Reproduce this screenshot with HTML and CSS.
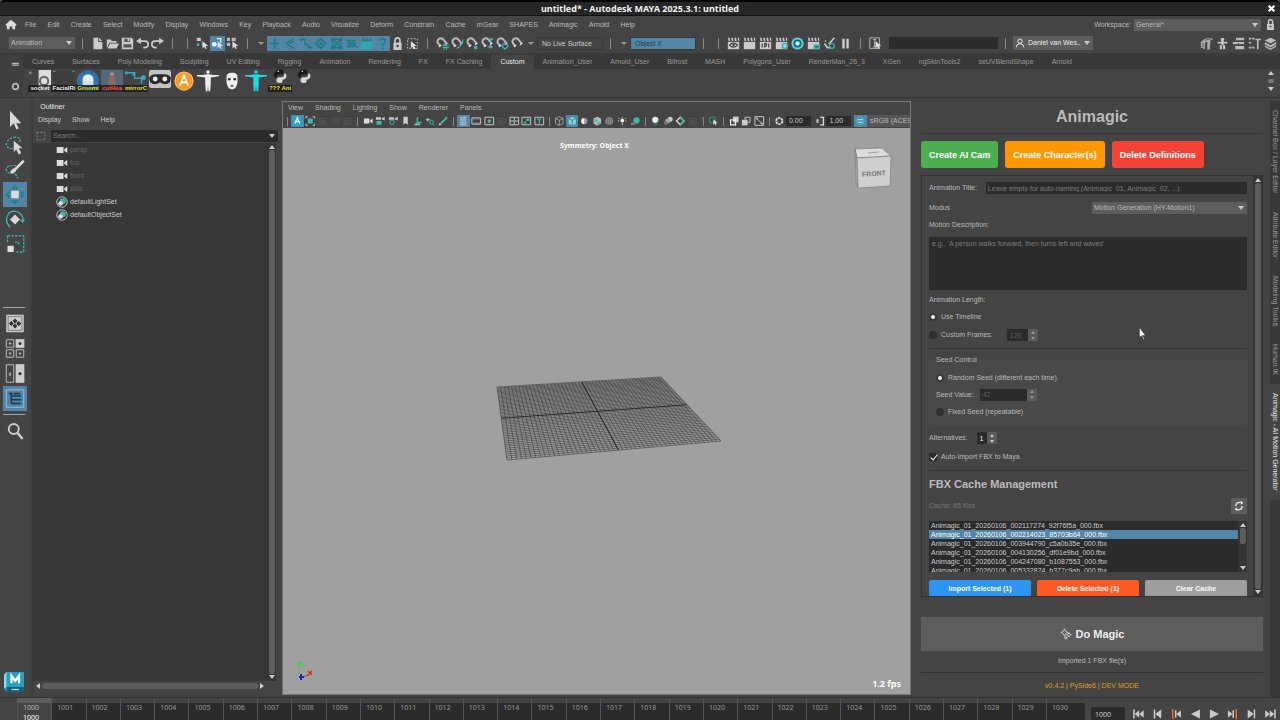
FILE: index.html
```html
<!DOCTYPE html>
<html lang="en">
<head>
  <meta charset="UTF-8" />
  <meta name="viewport" content="width=device-width, initial-scale=1" />
  <title>untitled* - Autodesk MAYA 2025.3.1: untitled</title>
  <link rel="stylesheet" href="styles.css">
</head>
<body>
  <header class="titlebar">
    <h1>untitled* - Autodesk MAYA 2025.3.1: untitled</h1>
    <button class="close" title="Close" data-icons="close"></button>
  </header>

  <!-- MAIN MENU -->
  <nav class="menubar">
    <span class="home" data-icons="home"></span>
    <div class="menus">
      <a href="#">File</a><a href="#">Edit</a><a href="#">Create</a><a href="#">Select</a><a href="#">Modify</a><a href="#">Display</a><a href="#">Windows</a><a href="#">Key</a><a href="#">Playback</a><a href="#">Audio</a><a href="#">Visualize</a><a href="#">Deform</a><a href="#">Constrain</a><a href="#">Cache</a><a href="#">mGear</a><a href="#">SHAPES</a><a href="#">Animagic</a><a href="#">Arnold</a><a href="#">Help</a>
    </div>
    <label class="push" for="workspace">Workspace:</label>
    <span class="select workspace"><select id="workspace"><option>General*</option></select></span>
    <span class="menu-lock" data-icons="lock"></span>
  </nav>

  <!-- STATUS LINE -->
  <div class="statusline">
    <span class="select mode"><select aria-label="Menu set"><option>Animation</option></select></span>
    <i class="sep"></i>
    <div class="icons" data-buttons="new open save undo redo"></div>
    <i class="sep"></i><i class="sep"></i>
    <div class="icons" data-buttons="selHier selObj* selComp"></div>
    <i class="sep"></i><i class="caret"></i>
    <div class="icons masks" data-buttons="mHandle* mJoint* mCurve* mSurface* mDeform* mDynamic* mRender* mMisc*"></div>
    <div class="icons" data-buttons="lock selBox"></div>
    <i class="sep"></i>
    <div class="icons" data-buttons="snapGrid snapCurve snapPoint snapCenter snapPlane magnet"></div>
    <i class="caret"></i>
    <input class="live" type="text" value="No Live Surface" aria-label="Live surface">
    <i class="sep"></i><i class="caret"></i>
    <input class="symmetry" type="text" value="Object X" aria-label="Symmetry">
    <i class="sep"></i><i class="sep"></i>
    <div class="icons spaced" data-buttons="clapEye clap clapIpr clapGear ring clapArrow paint pause"></div>
    <i class="sep"></i>
    <div class="icons" data-buttons="fieldCursor"></div>
    <input class="quick" type="text" aria-label="Quick selection">
    <i class="sep"></i>
    <button class="user"><span data-icons="person"></span>Daniel van Wes..<i class="tri"></i></button>
    <div class="icons push spaced" data-buttons="modelKit humanIk attrEd toolSet channelBox"></div>
  </div>

  <!-- SHELF -->
  <div class="shelf">
    <div class="shelf-gutter">
      <span data-icons="dash"></span>
      <span data-icons="gear"></span>
    </div>
    <div class="shelf-main">
      <nav class="shelf-tabs">
        <a href="#">Curves</a><a href="#">Surfaces</a><a href="#">Poly Modeling</a><a href="#">Sculpting</a><a href="#">UV Editing</a><a href="#">Rigging</a><a href="#">Animation</a><a href="#">Rendering</a><a href="#">FX</a><a href="#">FX Caching</a><a href="#" class="active">Custom</a><a href="#">Animation_User</a><a href="#">Arnold_User</a><a href="#">Bifrost</a><a href="#">MASH</a><a href="#">Polygons_User</a><a href="#">RenderMan_26_3</a><a href="#">XGen</a><a href="#">ngSkinTools2</a><a href="#">seUVBlendShape</a><a href="#">Arnold</a>
      </nav>
      <div class="shelf-items">
        <button data-icons="shSocket"><b class="white">socket</b></button>
        <button data-icons="shFacial"><b class="white">FacialRi</b></button>
        <button data-icons="shGroom"><b>Groomi</b></button>
        <button data-icons="shHead"><b class="red">cutHea</b></button>
        <button data-icons="shMirror"><b>mirrorC</b></button>
        <button data-icons="shRobot" title="Robot"></button>
        <button data-icons="shA" title="Animagic"></button>
        <button data-icons="shBody" title="Body"></button>
        <button data-icons="shFace" title="Face"></button>
        <button class="cyan" data-icons="shBody" title="Rig"></button>
        <button data-icons="shPython"><b>??? Ani</b></button>
        <button data-icons="shPython" title="Script"></button>
        <div class="shelf-scroll"><i class="tri up"></i><i class="knob"></i><i class="tri"></i></div>
      </div>
    </div>
  </div>

  <main class="workspace-area">
    <!-- TOOLBOX -->
    <aside class="toolbox">
      <div class="tools" data-buttons="tSelect tLasso tPaint tMove* tRotate tScale"></div>
      <div class="layouts" data-buttons="lSingle lFour lTwo lOutliner*"></div>
      <div class="find" data-buttons="search"></div>
      <div class="mlogo" data-icons="maya"></div>
    </aside>

    <!-- OUTLINER -->
    <section class="outliner">
      <h2>Outliner</h2>
      <nav><a href="#">Display</a><a href="#">Show</a><a href="#">Help</a></nav>
      <div class="outliner-search">
        <span data-icons="frame"></span>
        <input type="text" placeholder="Search..." aria-label="Search">
        <i class="tri"></i>
      </div>
      <div class="outliner-body">
        <ul>
          <li class="dim"><span data-icons="camera"></span>persp</li>
          <li class="dim"><span data-icons="camera"></span>top</li>
          <li class="dim"><span data-icons="camera"></span>front</li>
          <li class="dim"><span data-icons="camera"></span>side</li>
          <li><span data-icons="set"></span>defaultLightSet</li>
          <li><span data-icons="set"></span>defaultObjectSet</li>
        </ul>
        <div class="vscroll"><i class="tri up"></i><i class="thumb"></i><i class="tri"></i></div>
      </div>
      <div class="hscroll"><i class="tri left"></i><i class="thumb"></i><i class="tri right"></i></div>
    </section>

    <!-- VIEWPORT -->
    <section class="viewport">
      <nav><a href="#">View</a><a href="#">Shading</a><a href="#">Lighting</a><a href="#">Show</a><a href="#">Renderer</a><a href="#">Panels</a></nav>
      <div class="viewbar">
        <i class="sep"></i>
        <div class="vicons n5" data-buttons="vA* vFrame vDim vDim vDim"></div>
        <i class="sep"></i>
        <div class="vicons n7" data-buttons="camera camLock camAttr bookmark imgPlane panZoom pencil"></div>
        <i class="sep"></i>
        <div class="vicons n7" data-buttons="vGrid* vFilm vGate vDim vField vAction vTitle"></div>
        <i class="sep"></i>
        <div class="vicons n7" data-buttons="cube cubeFill* halfBall texBall checker light shadow"></div>
        <i class="sep"></i>
        <div class="vicons n4" data-buttons="ao blur aa vDim"></div>
        <i class="sep"></i>
        <div class="vicons" data-buttons="iso"></div>
        <i class="sep"></i>
        <div class="vicons n3" data-buttons="xray xray2 xjoint"></div>
        <i class="sep"></i>
        <div class="vicons" data-buttons="aperture"></div>
        <input type="text" value="0.00" aria-label="Exposure">
        <div class="vicons" data-buttons="gamma"></div>
        <input type="text" value="1.00" aria-label="Gamma">
        <div class="vicons" data-buttons="colorMgmt*"></div>
        <select aria-label="View transform"><option>sRGB (ACES)</option></select>
      </div>
      <div class="canvas">
        <svg id="scene" viewBox="283 128 627 566" preserveAspectRatio="xMidYMid meet">
          <g id="grid"></g>
          <!-- view cube -->
          <g stroke="#777" stroke-width=".6">
            <path d="M855 149l27-1 9 8-34 2z" fill="#dcdcdc"/>
            <path d="M855 149l2 9 1 30-2-5z" fill="#aaa"/>
            <path d="M857 158l34-2-1 30-32 2z" fill="#cfcfcf"/>
            <path d="M868 153l11-1" fill="none"/>
          </g>
          <text x="874" y="176" class="cube-label" transform="rotate(-3 874 174)">FRONT</text>
          <!-- axis gizmo -->
          <path d="M299 674v-6" stroke="#3c4" stroke-width=".6"/>
          <path d="M302 677l7-2" stroke="#c33"/>
          <path d="M297 662h4v4h-4z" fill="#3bd83b"/>
          <path d="M308 671l4 4m0-4l-4 4" stroke="#d22" stroke-width="1.3"/>
          <path d="M299 677h5M301 674v6" stroke="#22b" stroke-width="2"/>
        </svg>
        <p class="sym-label">Symmetry: Object X</p>
        <p class="fps">1.2 fps</p>
      </div>
    </section>

    <!-- ANIMAGIC PANEL -->
    <section class="animagic">
      <h2>Animagic</h2>
      <div class="top-actions">
        <button class="green">Create AI Cam</button>
        <button class="orange">Create Character(s)</button>
        <button class="crimson">Delete Definitions</button>
      </div>

      <div class="scrollbox">
        <form class="fields" onsubmit="return false">
          <div class="row title-row">
            <label for="animTitle">Animation Title:</label>
            <input type="text" id="animTitle" placeholder="Leave empty for auto-naming (Animagic_01, Animagic_02, ...)">
          </div>
          <div class="row modus-row">
            <label for="modus">Modus</label>
            <span class="select"><select id="modus"><option>Motion Generation (HY-Motion1)</option></select></span>
          </div>
          <label class="line" for="motion">Motion Description:</label>
          <textarea id="motion" placeholder="e.g., 'A person walks forward, then turns left and waves'"></textarea>
          <p class="line">Animation Length:</p>
          <label class="row"><input type="radio" name="length" checked>Use Timeline</label>
          <div class="row frames-row">
            <input type="radio" name="length" id="customFrames"><label for="customFrames">Custom Frames:</label>
            <span class="spin off"><input type="text" value="120" aria-label="Frames" disabled><i class="tri up"></i><i class="tri"></i></span>
          </div>
          <hr>
          <fieldset>
            <legend>Seed Control</legend>
            <label class="row"><input type="radio" name="seed" checked>Random Seed (different each time)</label>
            <div class="row">
              <label for="seedValue">Seed Value:</label>
              <span class="spin seed off"><input type="text" id="seedValue" value="42" disabled><i class="tri up"></i><i class="tri"></i></span>
            </div>
            <label class="row"><input type="radio" name="seed">Fixed Seed (repeatable)</label>
          </fieldset>
          <div class="row alt-row">
            <label for="alternatives">Alternatives:</label>
            <span class="spin alt"><input type="text" id="alternatives" value="1"><i class="tri up"></i><i class="tri"></i></span>
          </div>
          <label class="row auto-row"><input type="checkbox" checked>Auto-import FBX to Maya</label>
          <hr>
          <h3>FBX Cache Management</h3>
          <div class="row cache-row">
            <span>Cache: 65 files</span>
            <button class="refresh" title="Refresh" data-icons="refresh"></button>
          </div>
          <div class="filelist">
            <ul>
              <li>Animagic_01_20260106_002117274_92f76f5a_000.fbx</li>
              <li class="selected">Animagic_01_20260106_002214023_85703b64_000.fbx</li>
              <li>Animagic_01_20260106_003944790_c5a0b35e_000.fbx</li>
              <li>Animagic_01_20260106_004130256_df01e9bd_000.fbx</li>
              <li>Animagic_01_20260106_004247080_b1087553_000.fbx</li>
              <li>Animagic_01_20260106_005332874_b377c9ab_000.fbx</li>
            </ul>
            <div class="vscroll short"><i class="tri up"></i><i class="thumb"></i><i class="tri"></i></div>
          </div>
          <div class="cache-actions">
            <button class="blue">Import Selected (1)</button>
            <button class="deep">Delete Selected (1)</button>
            <button class="grey">Clear Cache</button>
          </div>
        </form>
        <div class="vscroll"><i class="tri up"></i><i class="thumb"></i><i class="tri"></i></div>
      </div>

      <button class="magic"><span data-icons="sparkle"></span>Do Magic</button>
      <p class="status">Imported 1 FBX file(s)</p>
      <p class="version">v0.4.2 | PySide6 | DEV MODE</p>
    </section>

    <nav class="side-tabs">
      <a href="#">Channel Box / Layer Editor</a>
      <a href="#">Attribute Editor</a>
      <a href="#">Modeling Toolkit</a>
      <a href="#">Human IK</a>
      <a href="#" class="active">Animagic - AI Motion Generator</a>
    </nav>
  </main>

  <!-- TIME SLIDER -->
  <footer class="timeline">
    <div class="frames" id="frames"></div>
    <input type="text" value="1000" aria-label="Current frame">
    <div class="transport" data-buttons="toStart stepBack keyBack playBack play keyFwd stepFwd toEnd"></div>
  </footer>

  <svg class="pointer" viewBox="0 0 8 14"><path d="M1 1v10l2-2 2 4 1-1-2-3h3z" fill="#fff" stroke="#222" stroke-width=".6"/></svg>

  <script src="script.js"></script>
</body>
</html>
```
FILE: styles.css
```css
* {
  box-sizing: border-box;
}
body {
  margin: 0;
  height: 100vh;
  display: flex;
  flex-direction: column;
  overflow: hidden;
  background: #444;
  color: #bbb;
  font-family: "Liberation Sans", Arial, sans-serif;
  font-size: 7px;
  line-height: 10px;
}
h1, h2, h3, p, ul {
  margin: 0;
  padding: 0;
}
ul {
  list-style: none;
}
a {
  color: inherit;
  text-decoration: none;
}
button, input, select, textarea {
  margin: 0;
  padding: 0;
  border: none;
  border-radius: 0;
  outline: none;
  background: none;
  color: inherit;
  font: inherit;
}
svg {
  display: block;
  width: 100%;
  height: 100%;
}
.push {
  margin-left: auto;
}

/* small shared parts */
.tri {
  width: 0;
  height: 0;
  border: 3px solid transparent;
  border-top: 4px solid #ccc;
  border-bottom: none;
}
.tri.up {
  border-top: none;
  border-bottom: 4px solid #ccc;
}
.tri.left {
  border: 3px solid transparent;
  border-right: 4px solid #ccc;
  border-left: none;
}
.tri.right {
  border: 3px solid transparent;
  border-left: 4px solid #ccc;
  border-right: none;
}
.select {
  position: relative;
  background: #5d5d5d;
}
.select select {
  appearance: none;
  display: block;
  width: 100%;
  height: 12px;
  padding-left: 2px;
}
.select::after {
  content: "";
  position: absolute;
  right: 3px;
  top: 4px;
  border: 3px solid transparent;
  border-top: 4px solid #ccc;
  border-bottom: none;
  pointer-events: none;
}
.vscroll {
  width: 9px;
  display: flex;
  flex-direction: column;
  align-items: center;
  gap: 1px;
  padding: 2px 0;
  background: #353535;
}
.vscroll .thumb {
  flex: 1;
  width: 6px;
  border-radius: 2px;
  background: #5d5d5d;
}

.titlebar {
  height: 16px;
  flex: none;
  display: flex;
  align-items: center;
  justify-content: center;
  position: relative;
  background: #262626;
  border-top: 2px solid #000;
  border-bottom: 1px solid #111;
  border-radius: 5px 5px 0 0;
  color: #f2f2f2;
}
.titlebar h1 {
  font: bold 9px/12px "Noto Sans", sans-serif;
}
.close {
  position: absolute;
  right: 4px;
  width: 9px;
  height: 9px;
}

.menubar {
  height: 17px;
  flex: none;
  display: flex;
  align-items: center;
  gap: 8px;
  padding: 0 4px 0 5px;
  white-space: nowrap;
}
.menus {
  width: 48%;
  display: flex;
  justify-content: space-between;
}
.home {
  width: 12px;
  height: 11px;
}
.workspace {
  width: 127px;
  margin-left: -5px;
}
.menu-lock {
  width: 11px;
  height: 11px;
  margin-left: -4px;
}

.statusline {
  height: 20px;
  flex: none;
  display: flex;
  align-items: center;
  padding: 0 2px 0 9px;
}
.statusline .mode {
  width: 66px;
}
.icons {
  display: flex;
}
.icons button {
  width: 15px;
  height: 15px;
  padding: 1px;
}
.spaced {
  gap: 1px;
}
.masks {
  width: 123px;
}
.masks button {
  flex: 1;
}
button.on {
  background: #5285a6;
}
.sep {
  width: 15px;
  height: 11px;
  flex: none;
  background: linear-gradient(#888, #888) center / 1px 100% no-repeat;
}
.caret {
  width: 12px;
  display: flex;
  justify-content: center;
}
.caret::before {
  content: "";
  border: 3px solid transparent;
  border-top: 3px solid #999;
  border-bottom: none;
}
.live, .symmetry {
  width: 66px;
  height: 13px;
  padding-left: 4px;
  border: 1px solid #3a3a3a;
  color: #ccc;
}
.symmetry {
  background: #5285a6;
  color: #1f3b50;
}
.quick {
  width: 109px;
  height: 12px;
  margin-left: 6px;
  background: #2b2b2b;
}
.user {
  width: 80px;
  height: 14px;
  display: flex;
  align-items: center;
  gap: 3px;
  padding: 0 2px;
  background: #5d5d5d;
  color: #eee;
  white-space: nowrap;
}
.user span {
  width: 10px;
  height: 10px;
}

.shelf {
  height: 45px;
  flex: none;
  display: flex;
  border-top: 2px solid #3a3a3a;
  border-bottom: 1px solid #333;
}
.shelf-gutter {
  width: 23px;
  display: flex;
  flex-direction: column;
  justify-content: space-between;
  padding: 5px 3px 6px 11px;
  background: #3f3f3f;
}
.shelf-gutter span {
  width: 9px;
  height: 9px;
}
.shelf-main {
  flex: 1;
  min-width: 0;
}
.shelf-tabs {
  height: 14px;
  display: flex;
  background: #383838;
  color: #999;
  line-height: 14px;
  white-space: nowrap;
}
.shelf-tabs a {
  padding: 0 9px;
}
.shelf-tabs .active {
  background: #444;
  color: #eee;
}
.shelf-items {
  display: flex;
  padding: 0 3px 0 5px;
}
.shelf-items > button {
  position: relative;
  width: 24px;
  height: 24px;
  padding: 0 1px;
}
.shelf-items b {
  position: absolute;
  left: 0;
  right: 0;
  bottom: 1px;
  background: rgba(20, 20, 20, 0.75);
  color: #e8e83c;
  font-size: 6px;
  line-height: 7px;
  text-align: center;
  white-space: nowrap;
}
.shelf-items .white {
  color: #eee;
}
.shelf-items .red {
  color: #ff4a4a;
}
.shelf-items button {
  color: #eee;
}
.shelf-items .cyan {
  color: #1fd8e8;
}
.shelf-scroll {
  margin: 2px 3px 0 auto;
  display: flex;
  flex-direction: column;
  align-items: center;
  justify-content: space-between;
  height: 20px;
}
.shelf-scroll .knob {
  width: 6px;
  height: 4px;
  border-radius: 2px;
  background: #777;
}

.workspace-area {
  flex: 1;
  min-height: 0;
  display: flex;
  padding-top: 3px;
}

/* toolbox */
.toolbox {
  width: 33px;
  flex: none;
  display: flex;
  flex-direction: column;
  padding: 6px 6px 4px 3px;
  border-right: 2px solid #3a3a3a;
}
.toolbox button {
  display: block;
  width: 24px;
  height: 25px;
  padding: 2px;
}
.layouts {
  margin-top: 50px;
  padding: 3px 0;
  border-top: 1px solid #aaa;
  border-bottom: 1px solid #aaa;
}
.find {
  padding-top: 4px;
}
.mlogo {
  width: 20px;
  height: 22px;
  margin: auto 0 0 1px;
}

/* outliner */
.outliner {
  width: 247px;
  flex: none;
  display: flex;
  flex-direction: column;
  padding-bottom: 7px;
}
.outliner h2 {
  width: 39px;
  font-size: 7px;
  font-weight: normal;
  line-height: 12px;
  text-align: center;
  color: #eee;
}
.outliner nav {
  display: flex;
  gap: 11px;
  padding: 2px 5px 4px;
  color: #ccc;
}
.outliner-search {
  height: 13px;
  display: flex;
  align-items: center;
  margin: 0 5px 0 3px;
}
.outliner-search span {
  width: 10px;
  height: 10px;
  margin-right: 5px;
}
.outliner-search input {
  flex: 1;
  height: 12px;
  padding-left: 2px;
  background: #2b2b2b;
}
.outliner-search .tri {
  margin-left: -9px;
}
input::placeholder, textarea::placeholder {
  color: #7d7d7d;
}
.outliner-body {
  flex: 1;
  display: flex;
  margin: 1px 4px 0 0;
  background: #373737;
}
.outliner-body ul {
  flex: 1;
  padding: 0 0 0 23px;
}
.outliner-body li {
  display: flex;
  align-items: center;
  gap: 2px;
  height: 13px;
  color: #ccc;
}
.outliner-body .dim {
  color: #666;
}
.outliner-body li span {
  width: 12px;
  height: 12px;
}
.hscroll {
  height: 9px;
  display: flex;
  align-items: center;
  gap: 2px;
  margin-right: 13px;
  padding: 0 3px;
}
.hscroll .thumb {
  flex: 1;
  height: 6px;
  border-radius: 3px;
  background: #5d5d5d;
}

/* viewport */
.viewport {
  flex: 1;
  min-width: 0;
  display: flex;
  flex-direction: column;
  margin: 0 0 2px 2px;
  border: 1px solid #777;
  overflow: hidden;
}
.viewport nav {
  display: flex;
  gap: 12px;
  padding: 1px 5px;
}
.viewbar {
  height: 14px;
  flex: none;
  display: flex;
  align-items: center;
  white-space: nowrap;
}
.viewbar .sep {
  width: 8px;
  height: 9px;
}
.vicons {
  flex: 1 1 12px;
  display: flex;
}
.n3 { flex: 3 1 36px; }
.n4 { flex: 4 1 48px; }
.n5 { flex: 5 1 60px; }
.n7 { flex: 7 1 84px; }
.vicons button {
  flex: 1;
  height: 12px;
  padding: 1px 0;
}
.viewbar input {
  width: 25px;
  height: 10px;
  margin-right: 3px;
  padding-left: 3px;
  background: #2b2b2b;
  color: #ccc;
}
.viewbar select {
  appearance: none;
  width: 43px;
  height: 12px;
  padding-left: 3px;
  background: #555;
}
.canvas {
  flex: 1;
  min-height: 0;
  position: relative;
  background: #a0a0a0;
}
.cube-label {
  font-size: 7px;
  font-weight: bold;
  text-anchor: middle;
  fill: #777;
}
.sym-label {
  position: absolute;
  top: 13px;
  left: 0;
  right: 0;
  padding-right: 4px;
  text-align: center;
  color: #fff;
  font-family: "Noto Sans", sans-serif;
  font-weight: bold;
}
.fps {
  position: absolute;
  right: 9px;
  bottom: 4px;
  color: #fff;
  font: bold 9px/12px "Noto Sans", sans-serif;
}

/* animagic */
.animagic {
  width: 359px;
  flex: none;
  display: flex;
  flex-direction: column;
  padding: 7px 7px 0 10px;
}
.animagic h2 {
  padding-bottom: 7px;
  border-bottom: 1px solid #333;
  font-size: 16px;
  line-height: 18px;
  text-align: center;
}
.top-actions {
  display: flex;
  gap: 7px;
  margin: 7px 0;
}
.top-actions button {
  height: 27px;
  padding: 0 8px;
  border-radius: 3px;
  color: #fff;
  font-size: 9px;
  font-weight: bold;
}
.green { background: #4caf50; }
.orange { background: #ff9800; }
.crimson { background: #f44336; }
.blue { background: #2f95f3; }
.deep { background: #ff5a24; }
.grey { background: #9e9e9e; }

.scrollbox {
  flex: 1;
  min-height: 0;
  display: flex;
  border: 1px solid #333;
  overflow: hidden;
}
.fields {
  flex: 1;
  display: flex;
  flex-direction: column;
  padding: 6px 6px 0 7px;
}
.row {
  height: 17px;
  flex: none;
  display: flex;
  align-items: center;
}
.row input[type="radio"], .row input[type="checkbox"] {
  appearance: none;
  width: 8px;
  height: 8px;
  margin-right: 4px;
  border-radius: 50%;
  background: #303030;
}
.row input[type="radio"]:checked {
  border: 2px solid #3a3a3a;
  background: #eee;
}
.row input[type="checkbox"] {
  border-radius: 1px;
  background: #2b2b2b;
}
.row input[type="checkbox"]::after {
  content: "";
  display: block;
  width: 3px;
  height: 6px;
  margin: 0 0 0 3px;
  border: solid #fff;
  border-width: 0 1px 1px 0;
  transform: rotate(40deg);
}
.title-row {
  height: 12px;
  gap: 9px;
}
.title-row input {
  flex: 1;
  height: 12px;
  padding-left: 2px;
  background: #2b2b2b;
}
.modus-row {
  height: 28px;
  justify-content: space-between;
}
.modus-row .select {
  width: 155px;
}
.line {
  height: 10px;
  margin-bottom: 3px;
}
.fields > .line {
  margin-top: -2px;
}
.fields textarea {
  height: 53px;
  flex: none;
  margin: 4px 0 7px;
  padding: 2px 3px;
  background: #2b2b2b;
  resize: none;
}
.frames-row {
  height: 20px;
}
.spin {
  width: 31px;
  height: 12px;
  display: grid;
  grid-template-columns: 1fr 10px;
  grid-template-rows: 6px 6px;
  place-items: center;
  margin-left: 14px;
  background: #5a5a5a;
}
.spin input {
  grid-row: span 2;
  width: 100%;
  height: 12px;
  padding-left: 3px;
  background: #2b2b2b;
}
.spin .tri {
  border-width: 3px 2px 0;
}
.spin .tri.up {
  border-width: 0 2px 3px;
}
.spin.off input {
  color: #606060;
}
.spin.off .tri {
  opacity: 0.5;
}
.spin.seed {
  width: 57px;
  margin-left: 6px;
}
.spin.alt {
  width: 20px;
  margin-left: 9px;
  color: #eee;
}
.fields hr {
  width: 100%;
  height: 1px;
  flex: none;
  margin: 3px 0 6px;
  border: none;
  background: #333;
}
.fields fieldset {
  flex: none;
  margin: 0;
  padding: 4px 7px 5px;
  border: none;
  background: #494949;
}
.fields legend {
  padding: 0;
}
.alt-row {
  height: 18px;
  margin-top: 4px;
}
.auto-row {
  height: 20px;
}
.animagic h3 {
  font-size: 11px;
  line-height: 15px;
}
.cache-row {
  height: 17px;
  margin: 5px 0 7px;
  justify-content: space-between;
  color: #777;
}
.refresh {
  width: 16px;
  height: 16px;
  padding: 3px;
  background: #5d5d5d;
  color: #eee;
}
.filelist {
  height: 51px;
  flex: none;
  display: flex;
  overflow: hidden;
  background: #2b2b2b;
}
.filelist ul {
  flex: 1;
  color: #ccc;
}
.filelist li {
  height: 9px;
  padding-left: 2px;
  line-height: 9px;
}
.filelist .selected {
  background: #5285a6;
  color: #fff;
}
.vscroll.short .thumb {
  flex: 0 0 16px;
  margin-bottom: auto;
}
.cache-actions {
  display: flex;
  gap: 6px;
  margin-top: 8px;
}
.cache-actions button {
  flex: 1;
  height: 18px;
  border-radius: 2px;
  color: #fff;
  font-weight: bold;
}
.magic {
  height: 34px;
  flex: none;
  display: flex;
  align-items: center;
  justify-content: center;
  gap: 4px;
  margin-top: 20px;
  background: #5d5d5d;
  color: #eee;
  font-size: 11px;
  font-weight: bold;
}
.magic span {
  width: 12px;
  height: 12px;
}
.status {
  padding: 5px 0 6px;
  border-bottom: 1px solid #333;
  text-align: center;
}
.version {
  padding: 8px 0 6px;
  color: #e0a020;
  text-align: center;
}

.side-tabs {
  width: 10px;
  flex: none;
  background: #383838;
  color: #999;
}
.side-tabs a {
  display: block;
  padding: 9px 0;
  writing-mode: vertical-rl;
  line-height: 10px;
  white-space: nowrap;
}
.side-tabs .active {
  background: #444;
  color: #eee;
}

/* time slider */
.timeline {
  height: 23px;
  flex: none;
  display: flex;
  border-top: 1px solid #333;
  font-family: "Noto Sans", sans-serif;
}
.frames {
  flex: 1;
  display: flex;
  margin-left: 17px;
  padding-right: 5px;
  background: linear-gradient(#444 5px, #2b2b2b 5px);
}
.frames div {
  flex: 1 1 0;
  padding: 5px 0 0 5px;
  line-height: 9px;
  border-left: 1px solid #555;
  color: #999;
}
.frames .current {
  background: linear-gradient(#5d5d5d 5px, #444 5px);
  color: #bbb;
}
.frames b {
  display: block;
  line-height: 11px;
  color: #fff;
  font-weight: normal;
}
.timeline input {
  width: 34px;
  height: 15px;
  margin: 9px 4px 0 6px;
  padding-left: 4px;
  background: #2b2b2b;
  color: #ccc;
}
.transport {
  width: 151px;
  display: flex;
  padding-top: 10px;
}
.transport button {
  flex: 1;
  height: 12px;
  color: #ccc;
}

.pointer {
  position: absolute;
  left: 1138px;
  top: 326px;
  width: 9px;
  height: 15px;
  pointer-events: none;
}
```
FILE: script.js
```js
// --- ICONS (all drawn on a 16x16 box) ---
const T = '#3fb8ae';
const M = '#1a7c80';
const arrow = '<path d="M8 5v9l2-2 2 3 1-1-1-3h3z" fill="#ddd"/>';
const clapBase = '<path d="M1 6h14v9H1z" fill="#ccc"/><path d="M1 1h2l1 4H2zM5 1h2l1 4H6zM9 1h2l1 4h-2zM13 1h2v4h-1z" fill="#ccc"/>';
const mag = '<path d="M5 11L2 7q-1-3 2-5 3-1 5 1l4 5" fill="none" stroke="#bbb" stroke-width="2.4"/><path d="M3.500 12l3-2M11 9.500l3-2" stroke="#eee" stroke-width="1.500"/>';
const stroke = (d, c = '#ccc', w = 1.5) => `<path d="${d}" fill="none" stroke="${c}" stroke-width="${w}"/>`;
const fill = (d, c = '#ccc') => `<path d="${d}" fill="${c}"/>`;
const dot = (x, y, r, c = '#ccc') => `<circle cx="${x}" cy="${y}" r="${r}" fill="${c}"/>`;
const ring = (x, y, r, c = '#ccc', w = 1.5) => `<circle cx="${x}" cy="${y}" r="${r}" fill="none" stroke="${c}" stroke-width="${w}"/>`;

const ICONS = {
  close: stroke('M3 3l10 10M13 3L3 13', '#fff', 4),
  home: fill('M8 1l8 7-1 2-1-1v6h-4v-4H6v4H2V9l-1 1-1-2z', '#ddd'),
  lock: '<path d="M3 7h10v9H3z" fill="#ccc"/>' + stroke('M5 8V4q0-3 3-3t3 3v4', '#ccc', 2) + dot(8, 11, 1.5, '#444'),
  new: fill('M3 1h6v5h5v9H3zM10 1l4 4h-4z'),
  open: fill('M1 3h5l1 2h6v2H4l-2 5-1 2zM5 8h11l-3 6H2z'),
  save: fill('M1 1h12l2 2v12H1z') + fill('M4 2h7v4H4zM3 9h10v4H3z', '#555') + fill('M8 2h2v3H8z'),
  undo: stroke('M4 5h7q4 0 4 4t-4 4H9', '#ccc', 2) + fill('M0 5l6-4v8z'),
  redo: stroke('M12 5H5q-4 0-4 4t4 4h2', '#ccc', 2) + fill('M16 5l-6-4v8z'),
  selHier: fill('M1 1h5v4H1z') + fill('M1 8h3v3H1zM7 7h3v3H7z', T) + arrow,
  selObj: dot(4, 9, 3, '#dff') + stroke('M7 2h5v5', '#dff') + arrow,
  selComp: fill('M1 1h4v4H1zM7 1h5v4H7zM1 7h4v4H1z', '#bbb') + arrow,
  mHandle: stroke('M8 2v12M2 8h12', M, 2),
  mJoint: stroke('M13 2L4 8l9 6M8 8l5-3', M),
  mCurve: stroke('M2 3h5v6h4v4h4', M) + fill('M1 2h3v3H1zM12 11h3v3h-3z', M),
  mSurface: stroke('M8 2l6 6-6 6-6-6z', M, 2) + dot(8, 8, 2, M),
  mDeform: stroke('M3 3h10v10H3zM3 3l10 10M13 3L3 13', M) + fill('M1 1h4v4H1zM11 1h4v4h-4zM1 11h4v4H1zM11 11h4v4h-4z', M),
  mDynamic: ring(8, 8, 4, M) + stroke('M1 3l14 10M3 13L13 3', M),
  mRender: fill('M1 6h14v9H1z', '#2fa8b0') + stroke('M2 4h12M4 1v4M8 1v4M12 1v4', M),
  mMisc: stroke('M5 5q0-3 3-3t3 3q0 2-3 4v2M8 13v2', M, 2),
  selBox: '<path d="M2 2h12v12H2z" fill="none" stroke="#aaa" stroke-width="1.500" stroke-dasharray="2 2"/>' + fill('M6 5v9l2-2 2 3 2-1-2-3h3z', '#ddd'),
  snapGrid: mag + stroke('M8 10h8M8 13h8M10 8v8M13 8v8', T, 1.2),
  snapCurve: mag + stroke('M7 14q6-2 8-11', T),
  snapPoint: mag + fill('M10 11h4v4h-4z', T),
  snapCenter: mag + stroke('M12 1v5M10 3h5M8 12h6', T) + dot(12, 12, 2, T),
  snapPlane: mag + stroke('M7 11l4-4 4 4-4 4z', T),
  magnet: mag,
  clap: clapBase,
  clapEye: clapBase + stroke('M3 10q5-5 10 0-5 5-10 0z', '#444') + dot(8, 10, 1.5, '#444'),
  clapIpr: clapBase + stroke('M4 8v5M7 13V8h2v3H7M12 8v5', '#444'),
  clapGear: clapBase + ring(12, 11, 3, T, 2),
  ring: dot(8, 8, 7.5, '#6ad0d8') + ring(8, 8, 4, '#167', 2) + dot(8, 8, 2, '#dff'),
  clapArrow: clapBase + fill('M8 9h8v6H8z', T) + stroke('M10 12h4', '#244'),
  paint: stroke('M14 1L7 9M2 8l3 5h4', '#ccc', 2) + ring(11, 11, 3, T) + dot(3, 5, 1),
  pause: fill('M4 2h3v12H4zM9 2h3v12H9z'),
  fieldCursor: stroke('M1 1h12v13H1zM5 3h4M7 3v9M5 12h4', '#ccc', 1) + arrow,
  person: ring(8, 5, 3.5, '#eee') + stroke('M2 15q0-6 6-6t6 6', '#eee'),
  modelKit: fill('M1 6l5-4 8-1 2 2-3 1-1 11-3 1V6l-3 1v8l-5-2z', '#aaa') + stroke('M2 8l3 1M2 11l3 1M8 6v8M6 4l8-2', '#444', 1),
  humanIk: dot(8, 3, 2.2) + stroke('M2 7h12', '#ccc', 2) + stroke('M8 5v5M6 10v5M10 10v5', '#ccc', 2.5),
  attrEd: fill('M5 1h10v3H5zM1 6h14v3H1zM4 11h11v4H4z', '#bbb') + stroke('M0 10h16M8 7v2', '#444', 1),
  toolSet: stroke('M1 2h3M5 2h3M1 7h3M1 13h3M5 13h3M9 3h7M12 3v12', '#bbb', 2),
  channelBox: fill('M8 1l7 3-7 4-7-4zM1 6l7 4 7-4v3l-7 4-7-4zM1 10l7 4 7-4v2l-7 4-7-4z', '#bbb'),
  dash: stroke('M2 6h12M2 9h12', '#bbb', 2),
  gear: ring(8, 8, 5, '#bbb', 3),
  shSocket: fill('M7 0h9v16H7z', '#ddd') + ring(11, 8, 3, '#666') + dot(1, 2, 1, '#888'),
  shFacial: fill('M0 0h16v16H0z', '#3e3e3e') + stroke('M0 1h2M14 1h2', '#777', 1),
  shGroom: dot(8, 8, 8, '#3272a8') + dot(8, 7, 4, '#e6eef4') + fill('M4 8h8v3H4z', '#cddce8'),
  shHead: fill('M0 0h16v16H0z', '#56677a') + dot(8, 3, 1.5, '#a88878') + fill('M6 5h4l1 8H5z', '#8a6a5c'),
  shMirror: stroke('M1 2h6v4h6M6 2v2M12 5v5', '#3aa6c0', 1) + fill('M0 1h2v2H0zM12 4h3v3h-3z', '#3aa6c0'),
  shRobot: fill('M1 0h14l1 1v11l-1 1H1l-1-1V1z', '#c4c4c4') + fill('M0 6q1-3 5-3h6q4 0 5 3l-1 3q-2 2-5 1l-2-1-2 1q-3 1-5-1z', '#2a2a2a') + dot(4.500, 6.500, 1.8, '#eee') + dot(11.500, 6.500, 1.8, '#eee'),
  shA: dot(8, 8, 7, '#f39a2c') + ring(8, 8, 6.5, '#ffc268', .6) + stroke('M5 11.500L8 4l3 7.500M6 9h4', '#fff', 1.1),
  shBody: '<g fill="currentColor"><circle cx="8" cy="1.500" r="1.300"/><path d="M0 3.600h4l3-.6h2l3 .6h4v1l-6 .8v4l-.4 6H8.300L8 10.500l-.3 5H6.400l-.4-6v-4L0 4.600z"/></g>',
  shFace: fill('M4 5q0-3 4-3t4 3v4q-1 5-4 5t-4-5z', '#eee') + fill('M5 6h2v1.500H5zM9 6h2v1.500H9zM7 11h2v1H7z', '#222'),
  shPython: '<g transform="translate(3 -1) scale(.62)">' + fill('M5 1h5q2 0 2 2v4H7Q4 7 4 11H2Q-1 7 3 4V3q0-2 2-2z', '#181818') + fill('M13 5q4 1 2 6-1 2-4 2v2q0 2-3 2t-4-2v-2q0-3 3-3h3q3 0 3-3z', '#d8d8d8') + dot(6, 3, .9, '#fff') + '</g>',
  tSelect: fill('M4 1v13l3-3 2 5 2-1-2-4h4z', '#d8d8d8'),
  tLasso: '<path d="M12 6q1-4-4-4-6 1-7 6 1 4 5 3" fill="none" stroke="#3fb8ae" stroke-dasharray="2 1"/>' + fill('M7 5v9l2-2 2 4 2-1-2-4h3z', '#d8d8d8'),
  tPaint: '<path d="M9 5q-8-1-8 3 0 3 5 3 4 1 4 4" fill="none" stroke="#3fb8ae" stroke-dasharray="2 1"/>' + stroke('M15 1L8 8', '#ddd', 2) + fill('M4 11q1-4 4-4l1 2q-1 2-5 2z', '#ddd'),
  tMove: fill('M5 5h6v6H5z', '#ddd') + stroke('M6 3l2-2 2 2zM6 13l2 2 2-2zM3 6L1 8l2 2zM13 6l2 2-2 2z', '#1f7f88', 1),
  tRotate: stroke('M4 14Q-1 9 3 3q5-4 10 1 2 3 1 5', T, 1) + fill('M8 4l4 4-4 4-4-4z', '#d8d8d8') + fill('M12 8h4l-2 3z', T),
  tScale: '<path d="M2 1h13v13H8M2 1v6M8 6h3v3" fill="none" stroke="#3fb8ae" stroke-dasharray="2 1"/>' + fill('M2 9h5v5H2z', '#ddd'),
  lSingle: fill('M1 1h14v14H1z') + stroke('M2.500 2.500h11v11h-11z', '#666', .6) + fill('M8 4l2 2-2 2-2-2zM8 8l2 2-2 2-2-2zM5 6l2 2-2 2-2-2zM11 6l2 2-2 2-2-2z', '#333'),
  lFour: stroke('M1 1h6v6H1zM1 9h6v6H1zM9 9h6v6H9zM4 3v2M3 4h2M4 11v2M3 12h2M12 11v2M11 12h2', '#bbb', .8) + fill('M8.500.500h7v7h-7z') + dot(12, 4, 1.2, '#333'),
  lTwo: stroke('M1 1h6v14H1zM4 7v3M3 8.500h2', '#bbb', .8) + fill('M8.500.500h7v15h-7z') + dot(12, 8, 1.3, '#333'),
  lOutliner: stroke('M1 1h14v14H1z', '#9cc6d8', .7) + stroke('M3 4h3M5 4v8M5 6h8M5 9h8M5 12h8M7 4h5', '#173848', 1.1),
  search: ring(7, 6, 4, '#ccc') + stroke('M10 9l4 5', '#ccc', 2),
  maya: fill('M2 0h14v16H2L0 13V2z', '#2a9fc0') + fill('M2 0l-2 2v11l2-1z', '#8ed8e8') + fill('M2 12h14v4H2z', '#175e7c') + stroke('M6 9V3l3 4 3-4v6', '#fff', 1.8) + stroke('M6 14h6', '#cde', 1),
  frame: '<path d="M2 2h12v12H2z" fill="none" stroke="#777" stroke-width="2" stroke-dasharray="3 2"/>',
  camera: fill('M1 4h9v8H1zM11 7l4-3v8l-4-3z', '#ddd'),
  set: ring(8, 8, 7, '#ccc', 1.2) + dot(9, 7, 4, T) + dot(6, 10, 3, '#ddd'),
  vA: fill('M0 0h16v16H0z', '#27a5c4') + stroke('M4 12l4-9 4 9M6 9h4', '#fff', 2),
  vFrame: fill('M4 4h8v8H4z', T) + stroke('M1 4V1h3M12 1h3v3M15 12v3h-3M4 15H1v-3'),
  vDim: stroke('M3 4h10v9H3z', '#555') + fill('M4 6h8v5H4z', '#4d4d4d'),
  camLock: fill('M1 2h8v4H1zM10 4l5-3v6l-5-2z') + fill('M2 8h8v6H2z', T),
  camAttr: fill('M1 2h8v4H1zM10 4l5-3v6l-5-2z') + ring(6, 10, 3.5, T),
  bookmark: fill('M5 1h7v13l-3.500-3L5 14z'),
  imgPlane: fill('M1 13l6-4h8l-5 4z', T) + stroke('M8 2q-4 4 0 9', T, 2) + stroke('M2 14h9', '#ccc'),
  panZoom: stroke('M1 6h7M4 3v6', '#ccc') + ring(10, 10, 3, T) + stroke('M12 12l3 3', T),
  pencil: stroke('M14 2L4 12', T, 3) + fill('M1 15l1-4 3 3z', '#ddd'),
  vGrid: stroke('M3 2h10M3 5h10M3 8h10M3 11h10M3 14h10', '#e0e0e0', 1.2),
  vFilm: stroke('M1 3h14v10H1z') + stroke('M1 4.500h14M1 11.500h14', '#999'),
  vGate: stroke('M1 2h14v12H1z') + dot(8, 8, 3, T),
  vField: stroke('M1 2h14v12H1zM8 2v12M1 8h14') + dot(8, 8, 2, T),
  vAction: stroke('M1 2h14v12H1z') + fill('M8 4h5v4H8zM4 9h4v3H4z', T),
  vTitle: stroke('M1 2h14v12H1z') + stroke('M5 5h6M8 5v7', T, 2),
  cube: stroke('M8 1l6 3v8l-6 3-6-3V4zM2 4l6 3 6-3M8 7v8', '#ccc', 1),
  cubeFill: fill('M8 1l6 3v8l-6 3-6-3V4z', '#7fd4dc') + stroke('M2 4l6 3 6-3M8 7v8', '#165', 1),
  halfBall: dot(8, 8, 5, '#999') + fill('M8 3a5 5 0 0 0 0 10z', '#eee'),
  texBall: fill('M8 1l6 3v8l-6 3-6-3V4z', '#bbb') + fill('M4 5h4v4H4zM8 9h4v4H8z', T),
  checker: dot(8, 8, 6, '#aaa') + stroke('M3 5h10M2 8h12M3 11h10M5 3v10M8 2v12M11 3v10', '#444', .8),
  light: dot(8, 7, 3, '#eee') + stroke('M8 10v5M2 3l2 2M14 3l-2 2M1 8h2M13 8h2M8 1v2', '#ccc'),
  shadow: dot(10, 7, 5, T) + fill('M1 11h6v3H1z', '#888'),
  ao: dot(8, 6, 5, '#eee') + fill('M3 12h10l-3 3H6z', '#1f7a78'),
  blur: dot(11, 5, 4) + dot(7, 8, 4, '#aaa') + dot(4, 11, 3, '#777'),
  aa: stroke('M8 2l6 6-6 6-6-6z', '#ddd', 2) + stroke('M8 2l6 6-6 6', T, 2),
  iso: stroke('M2 2h9v9H2z', T, 1) + arrow,
  xray: fill('M6 1h9v9H6z') + stroke('M2 6h8v8H2z', '#eee', 2),
  xray2: stroke('M6 2h8v8H6z') + fill('M1 6h9v9H1z'),
  xjoint: stroke('M1 1h14v14H1zM4 4l8 8') + dot(4, 4, 1.5) + dot(12, 12, 1.5),
  aperture: '<circle cx="8" cy="8" r="5" fill="none" stroke="#ddd" stroke-width="3" stroke-dasharray="4 1.200"/>',
  gamma: fill('M2 5h3v6H2z') + stroke('M8 2h5v12H8', '#ddd', 2),
  colorMgmt: ring(8, 8, 6, '#2cc', 1.5) + stroke('M4 6h8M4 10h8', '#bff', 1.5),
  refresh: stroke('M3 8V6q1-4 6-4h3M13 8v2q-1 4-6 4H4', '#eee', 2) + fill('M11 0l4 3-4 3zM5 16l-4-3 4-3z', '#eee'),
  sparkle: stroke('M6 1l1.500 3.500L11 6 7.500 7.500 6 11 4.500 7.500 1 6l3.500-1.500zM12 6l1 2 2 1-2 1-1 2-1-2-2-1 2-1zM8 11l.700 1.500L10 13l-1.300.700L8 15l-.700-1.300L6 13l1.300-.500z', '#ddd', 1.1),
  toStart: fill('M1 2h2v12H1zM9 3v10L3 8zM15 3v10L9 8z'),
  stepBack: fill('M3 2h2v12H3zM13 2v12L5 8z'),
  keyBack: fill('M2 1h2v14H2z', '#e0703a') + fill('M6 3h2v10H6zM14 3v10L8 8z'),
  playBack: fill('M14 2v12L2 8z'),
  play: fill('M2 2v12l12-6z'),
  keyFwd: fill('M12 1h2v14h-2z', '#e0703a') + fill('M8 3h2v10H8zM2 3v10l6-5z'),
  stepFwd: fill('M11 2h2v12h-2zM3 2v12l8-6z'),
  toEnd: fill('M13 2h2v12h-2zM1 3v10l6-5zM7 3v10l6-5z')
};

function svg(name) {
  return `<svg viewBox="0 0 16 16" aria-hidden="true">${ICONS[name]}</svg>`;
}

document.querySelectorAll('[data-icons]').forEach(el => {
  el.insertAdjacentHTML('afterbegin', svg(el.dataset.icons));
});

// a trailing * marks the button as switched on
document.querySelectorAll('[data-buttons]').forEach(el => {
  el.innerHTML = el.dataset.buttons.split(' ').map(item => {
    const name = item.replace('*', '');
    const on = item.endsWith('*') ? ' class="on"' : '';
    return `<button${on} aria-label="${name}">${svg(name)}</button>`;
  }).join('');
});

// --- GROUND GRID ---
// projective map of the unit square onto the four floor corners
const P = [[497, 387], [661, 377], [721, 441], [507, 460]];
function project(u, v) {
  const [a, b, c, d] = P;
  const dx1 = b[0] - c[0], dx2 = d[0] - c[0], sx = a[0] - b[0] + c[0] - d[0];
  const dy1 = b[1] - c[1], dy2 = d[1] - c[1], sy = a[1] - b[1] + c[1] - d[1];
  const det = dx1 * dy2 - dx2 * dy1;
  const g = (sx * dy2 - dx2 * sy) / det;
  const h = (dx1 * sy - sx * dy1) / det;
  const w = g * u + h * v + 1;
  const x = ((b[0] - a[0] + g * b[0]) * u + (d[0] - a[0] + h * d[0]) * v + a[0]) / w;
  const y = ((b[1] - a[1] + g * b[1]) * u + (d[1] - a[1] + h * d[1]) * v + a[1]) / w;
  return x.toFixed(1) + ' ' + y.toFixed(1);
}

const CELLS = 48;
let lines = '';
for (let i = 0; i <= CELLS; i++) {
  const t = i / CELLS;
  lines += `M${project(t, 0)}L${project(t, 1)}M${project(0, t)}L${project(1, t)}`;
}
document.getElementById('grid').innerHTML =
  stroke(lines, '#3c3c3c', .6) +
  stroke(`M${project(.5, 0)}L${project(.5, 1)}M${project(0, .5)}L${project(1, .5)}`, '#2a2a2a', 1.1);

// --- TIME SLIDER ---
let cells = '';
for (let f = 1000; f <= 1030; f++) {
  cells += f === 1000 ? `<div class="current">${f}<b>${f}</b></div>` : `<div>${f}</div>`;
}
document.getElementById('frames').innerHTML = cells;
```
